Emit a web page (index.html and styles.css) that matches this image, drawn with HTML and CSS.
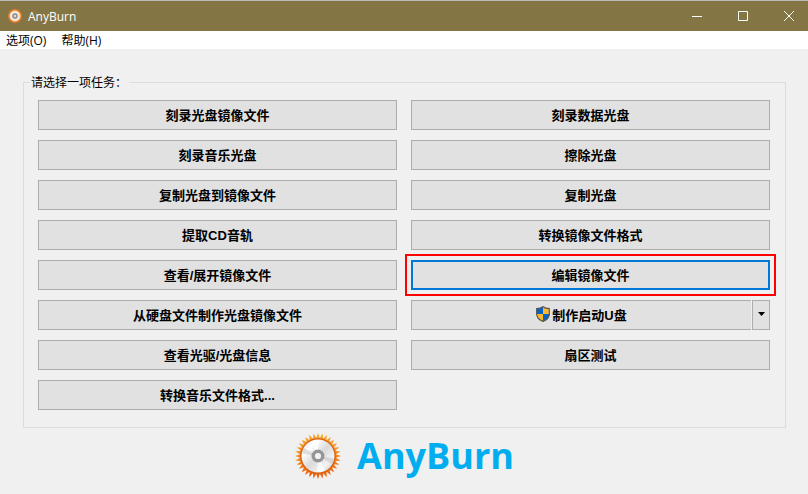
FILE: index.html
```
<!DOCTYPE html>
<html lang="zh-CN">
<head>
    <meta charset="UTF-8">
    <meta name="viewport" content="width=device-width, initial-scale=1.0">
    <title>AnyBurn</title>
    <link rel="stylesheet" href="styles.css">
</head>
<body>
    <header class="titlebar">
        <svg class="app-icon" viewBox="0 0 14 14" aria-hidden="true">
            <circle cx="7" cy="7" r="6.2" fill="#f4e6d8" stroke="#e8791e" stroke-width="1.5"/>
            <circle cx="7" cy="7" r="2" fill="#ddd" stroke="#8a8a8a" stroke-width="1.4"/>
        </svg>
        <h1 class="title">AnyBurn</h1>
        <div class="window-controls">
            <button class="window-button" aria-label="最小化">
                <svg viewBox="0 0 10 10"><path d="M0 5.5h10"/></svg>
            </button>
            <button class="window-button" aria-label="最大化">
                <svg viewBox="0 0 10 10"><path d="M.5.5h9v9h-9z"/></svg>
            </button>
            <button class="window-button" aria-label="关闭">
                <svg viewBox="0 0 10 10"><path d="M0 0l10 10M10 0L0 10"/></svg>
            </button>
        </div>
    </header>

    <nav class="menubar">
        <button class="menu-item">选项(O)</button>
        <button class="menu-item">帮助(H)</button>
    </nav>

    <main class="content">
        <fieldset class="tasks">
            <legend>请选择一项任务：</legend>
            <div class="task-grid">
                <button class="task">刻录光盘镜像文件</button>
                <button class="task">刻录数据光盘</button>
                <button class="task">刻录音乐光盘</button>
                <button class="task">擦除光盘</button>
                <button class="task">复制光盘到镜像文件</button>
                <button class="task">复制光盘</button>
                <button class="task">提取CD音轨</button>
                <button class="task">转换镜像文件格式</button>
                <button class="task">查看/展开镜像文件</button>
                <button class="task task-selected">编辑镜像文件</button>
                <button class="task">从硬盘文件制作光盘镜像文件</button>
                <div class="split">
                    <button class="task split-main">
                        <svg class="shield" viewBox="0 0 14 16" aria-hidden="true">
                            <path d="M7 .5C5.5 1.8 3.2 2.5.6 2.5V8H7z" fill="#0a63c4"/>
                            <path d="M7 .5c1.5 1.3 3.8 2 6.4 2V8H7z" fill="#fdb92e"/>
                            <path d="M.6 8H7v7.5C3.1 14 .6 11.5.6 8z" fill="#fdb92e"/>
                            <path d="M13.4 8H7v7.5c3.9-1.5 6.4-4 6.4-7.5z" fill="#0a63c4"/>
                            <path d="M7 .7C5.5 2 3.2 2.6.7 2.6V8c0 3.5 2.5 5.9 6.3 7.4 3.8-1.5 6.3-3.9 6.3-7.4V2.6C10.8 2.6 8.5 2 7 .7z" fill="none" stroke="#555" stroke-width="1.2"/>
                        </svg>
                        制作启动U盘
                    </button>
                    <button class="task split-arrow" aria-label="更多选项">
                        <svg viewBox="0 0 7 4"><path d="M0 0h7L3.5 4z"/></svg>
                    </button>
                </div>
                <button class="task">查看光驱/光盘信息</button>
                <button class="task">扇区测试</button>
                <button class="task">转换音乐文件格式...</button>
            </div>
        </fieldset>

        <div class="brand">
            <svg class="brand-icon" viewBox="-23 -23 46 46" aria-hidden="true">
                <defs>
                    <linearGradient id="flame" x1="0" y1="0" x2="0" y2="1">
                        <stop offset="0" stop-color="#f9a62b"/>
                        <stop offset="0.5" stop-color="#f38a1f"/>
                        <stop offset="1" stop-color="#e85a0c"/>
                    </linearGradient>
                    <linearGradient id="disc" x1="0" y1="0" x2="1" y2="1">
                        <stop offset="0" stop-color="#d4d4d4"/>
                        <stop offset="0.25" stop-color="#fff"/>
                        <stop offset="0.5" stop-color="#dadada"/>
                        <stop offset="0.75" stop-color="#f2f2f2"/>
                        <stop offset="1" stop-color="#c6c6c6"/>
                    </linearGradient>
                    <path id="ray" d="M-2-17L0-23 2-17z"/>
                    <g id="rays">
                        <use href="#ray"/>
                        <use href="#ray" transform="rotate(11.25)"/>
                        <use href="#ray" transform="rotate(22.5)"/>
                        <use href="#ray" transform="rotate(33.75)"/>
                    </g>
                    <clipPath id="face"><circle r="16"/></clipPath>
                    <mask id="sun" maskUnits="userSpaceOnUse" x="-23" y="-23" width="46" height="46">
                        <g fill="#fff">
                            <circle r="18.5"/>
                            <use href="#rays"/>
                            <use href="#rays" transform="rotate(45)"/>
                            <use href="#rays" transform="rotate(90)"/>
                            <use href="#rays" transform="rotate(135)"/>
                            <use href="#rays" transform="rotate(180)"/>
                            <use href="#rays" transform="rotate(225)"/>
                            <use href="#rays" transform="rotate(270)"/>
                            <use href="#rays" transform="rotate(315)"/>
                        </g>
                    </mask>
                </defs>
                <rect x="-23" y="-23" width="46" height="46" fill="url(#flame)" mask="url(#sun)"/>
                <circle r="17.8" fill="#d9600f"/>
                <circle r="16.5" fill="url(#disc)"/>
                <g clip-path="url(#face)">
                    <path d="M0 0L-19-3-18-10z" fill="#bfbfbf" opacity="0.5"/>
                    <path d="M0 0L19 3 18 10z" fill="#bfbfbf" opacity="0.5"/>
                    <path d="M0 0L-9-18 1-19z" fill="#fff" opacity="0.8"/>
                    <path d="M0 0L9 18-1 19z" fill="#fff" opacity="0.8"/>
                </g>
                <circle r="4.8" fill="#f2f2f2" stroke="#959595" stroke-width="3.4"/>
            </svg>
            <span class="brand-name">AnyBurn</span>
        </div>
    </main>
</body>
</html>
```

FILE: styles.css
```
* {
    box-sizing: border-box;
}
body {
    margin: 0;
    background: #f0f0f0;
    color: #000;
    font-family: "Open Sans", "Noto Sans CJK SC", sans-serif;
    font-size: 12px;
}
button {
    margin: 0;
    padding: 0;
    border: none;
    background: none;
    color: inherit;
    font: inherit;
}
.titlebar {
    display: flex;
    align-items: center;
    height: 31px;
    padding-left: 8px;
    border-top: 1px solid #b9b9b9;
    background: #847545;
    color: #fff;
}
.app-icon {
    width: 14px;
    height: 14px;
}
.title {
    margin: 0 0 0 6px;
    font-size: 12px;
    font-weight: normal;
}
.window-controls {
    display: flex;
    gap: 36px;
    align-self: stretch;
    margin-left: auto;
    padding-right: 14px;
}
.window-button {
    display: flex;
    align-items: center;
}
.window-button svg {
    width: 10px;
    height: 10px;
    fill: none;
    stroke: #fff;
}
.menubar {
    display: flex;
    gap: 15px;
    height: 18px;
    padding: 1px 6px 0;
    background: #fff;
}
.menu-item {
    line-height: 18px;
}
.content {
    padding: 25px 22px 0 23px;
}
.tasks {
    min-width: 0;
    margin: 0;
    padding: 10px 15px 17px 14px;
    border: 1px solid #dcdcdc;
}
.tasks legend {
    margin-left: -8px;
    padding: 0 2px 0 1px;
    font-family: "Noto Sans CJK SC", sans-serif;
    line-height: 16px;
}
.task-grid {
    display: grid;
    grid-template-columns: 1fr 1fr;
    gap: 10px 14px;
}
.task {
    display: flex;
    align-items: center;
    justify-content: center;
    height: 30px;
    padding-bottom: 2px;
    border: 1px solid #adadad;
    background: #e1e1e1;
    font-family: "Liberation Sans", "Noto Sans CJK SC", sans-serif;
    font-size: 13px;
    font-weight: bold;
}
.task-selected {
    border: 2px solid #0078d7;
    outline: 2px solid #f00;
    outline-offset: 4px;
}
.split {
    display: flex;
    gap: 1px;
}
.split-main {
    flex: 1;
    gap: 2px;
    border-right: none;
}
.split-arrow {
    width: 18px;
}
.split-arrow svg {
    width: 7px;
    height: 4px;
}
.shield {
    width: 14px;
    height: 16px;
}
.brand {
    display: flex;
    align-items: center;
    justify-content: center;
    gap: 16px;
    margin-top: 5px;
}
.brand-icon {
    width: 46px;
    height: 46px;
}
.brand-name {
    color: #00aeef;
    font-size: 36px;
    font-weight: bold;
    line-height: 46px;
}
```
